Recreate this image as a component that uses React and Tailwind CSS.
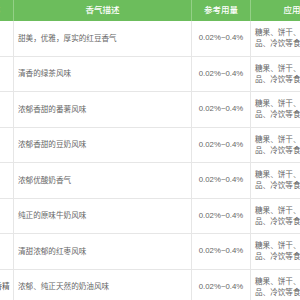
import React from 'react';

const rows = [
  { name: '红豆香精', desc: '甜美，优雅，厚实的红豆香气' },
  { name: '绿茶香精', desc: '清香的绿茶风味' },
  { name: '番薯香精', desc: '浓郁香甜的番薯风味' },
  { name: '豆奶香精', desc: '浓郁香甜的豆奶风味' },
  { name: '酸奶香精', desc: '浓郁优酸奶香气' },
  { name: '牛奶香精', desc: '纯正的原味牛奶风味' },
  { name: '红枣香精', desc: '清甜浓郁的红枣风味' },
  { name: '天然奶油味香精', desc: '浓郁、纯正天然的奶油风味' },
];

const headers = ['产品名称', '香气描述', '参考用量', '应用领域'];

export default function App() {
  return (
    <div className="w-[300px] h-[300px] overflow-hidden bg-white font-['Liberation_Sans','Noto_Sans_CJK_SC',sans-serif]">
      {/* table is scrolled sideways, first column mostly out of view */}
      <div className="-ml-[47px] w-max grid grid-cols-[61px_178px_59px_100px]">
        {headers.map((h) => (
          <div
            key={h}
            className="h-[21px] flex items-center justify-center bg-[#6cbd5c] border-r border-[#94d087] text-white text-[8.5px] font-medium whitespace-nowrap"
          >
            {h}
          </div>
        ))}

        {rows.map((r) => (
          <React.Fragment key={r.name}>
            <div className="h-[35.5px] flex items-center justify-center px-1 border-r border-b border-[#e6e6e6] text-[#555] text-[7.6px] whitespace-nowrap">
              {r.name}
            </div>
            <div className="h-[35.5px] flex items-center px-1 border-r border-b border-[#e6e6e6] text-[#666] text-[7.6px] whitespace-nowrap">
              {r.desc}
            </div>
            <div className="h-[35.5px] flex items-center justify-center border-r border-b border-[#e6e6e6] text-[#666] text-[7.8px] whitespace-nowrap">
              0.02%~0.4%
            </div>
            <div className="h-[35.5px] flex flex-col justify-center px-1 border-r border-b border-[#e6e6e6] text-[#666] text-[7.6px] leading-[11px] whitespace-nowrap">
              <span>糖果、饼干、糕点、乳制</span>
              <span>品、冷饮等食品</span>
            </div>
          </React.Fragment>
        ))}
      </div>
    </div>
  );
}
